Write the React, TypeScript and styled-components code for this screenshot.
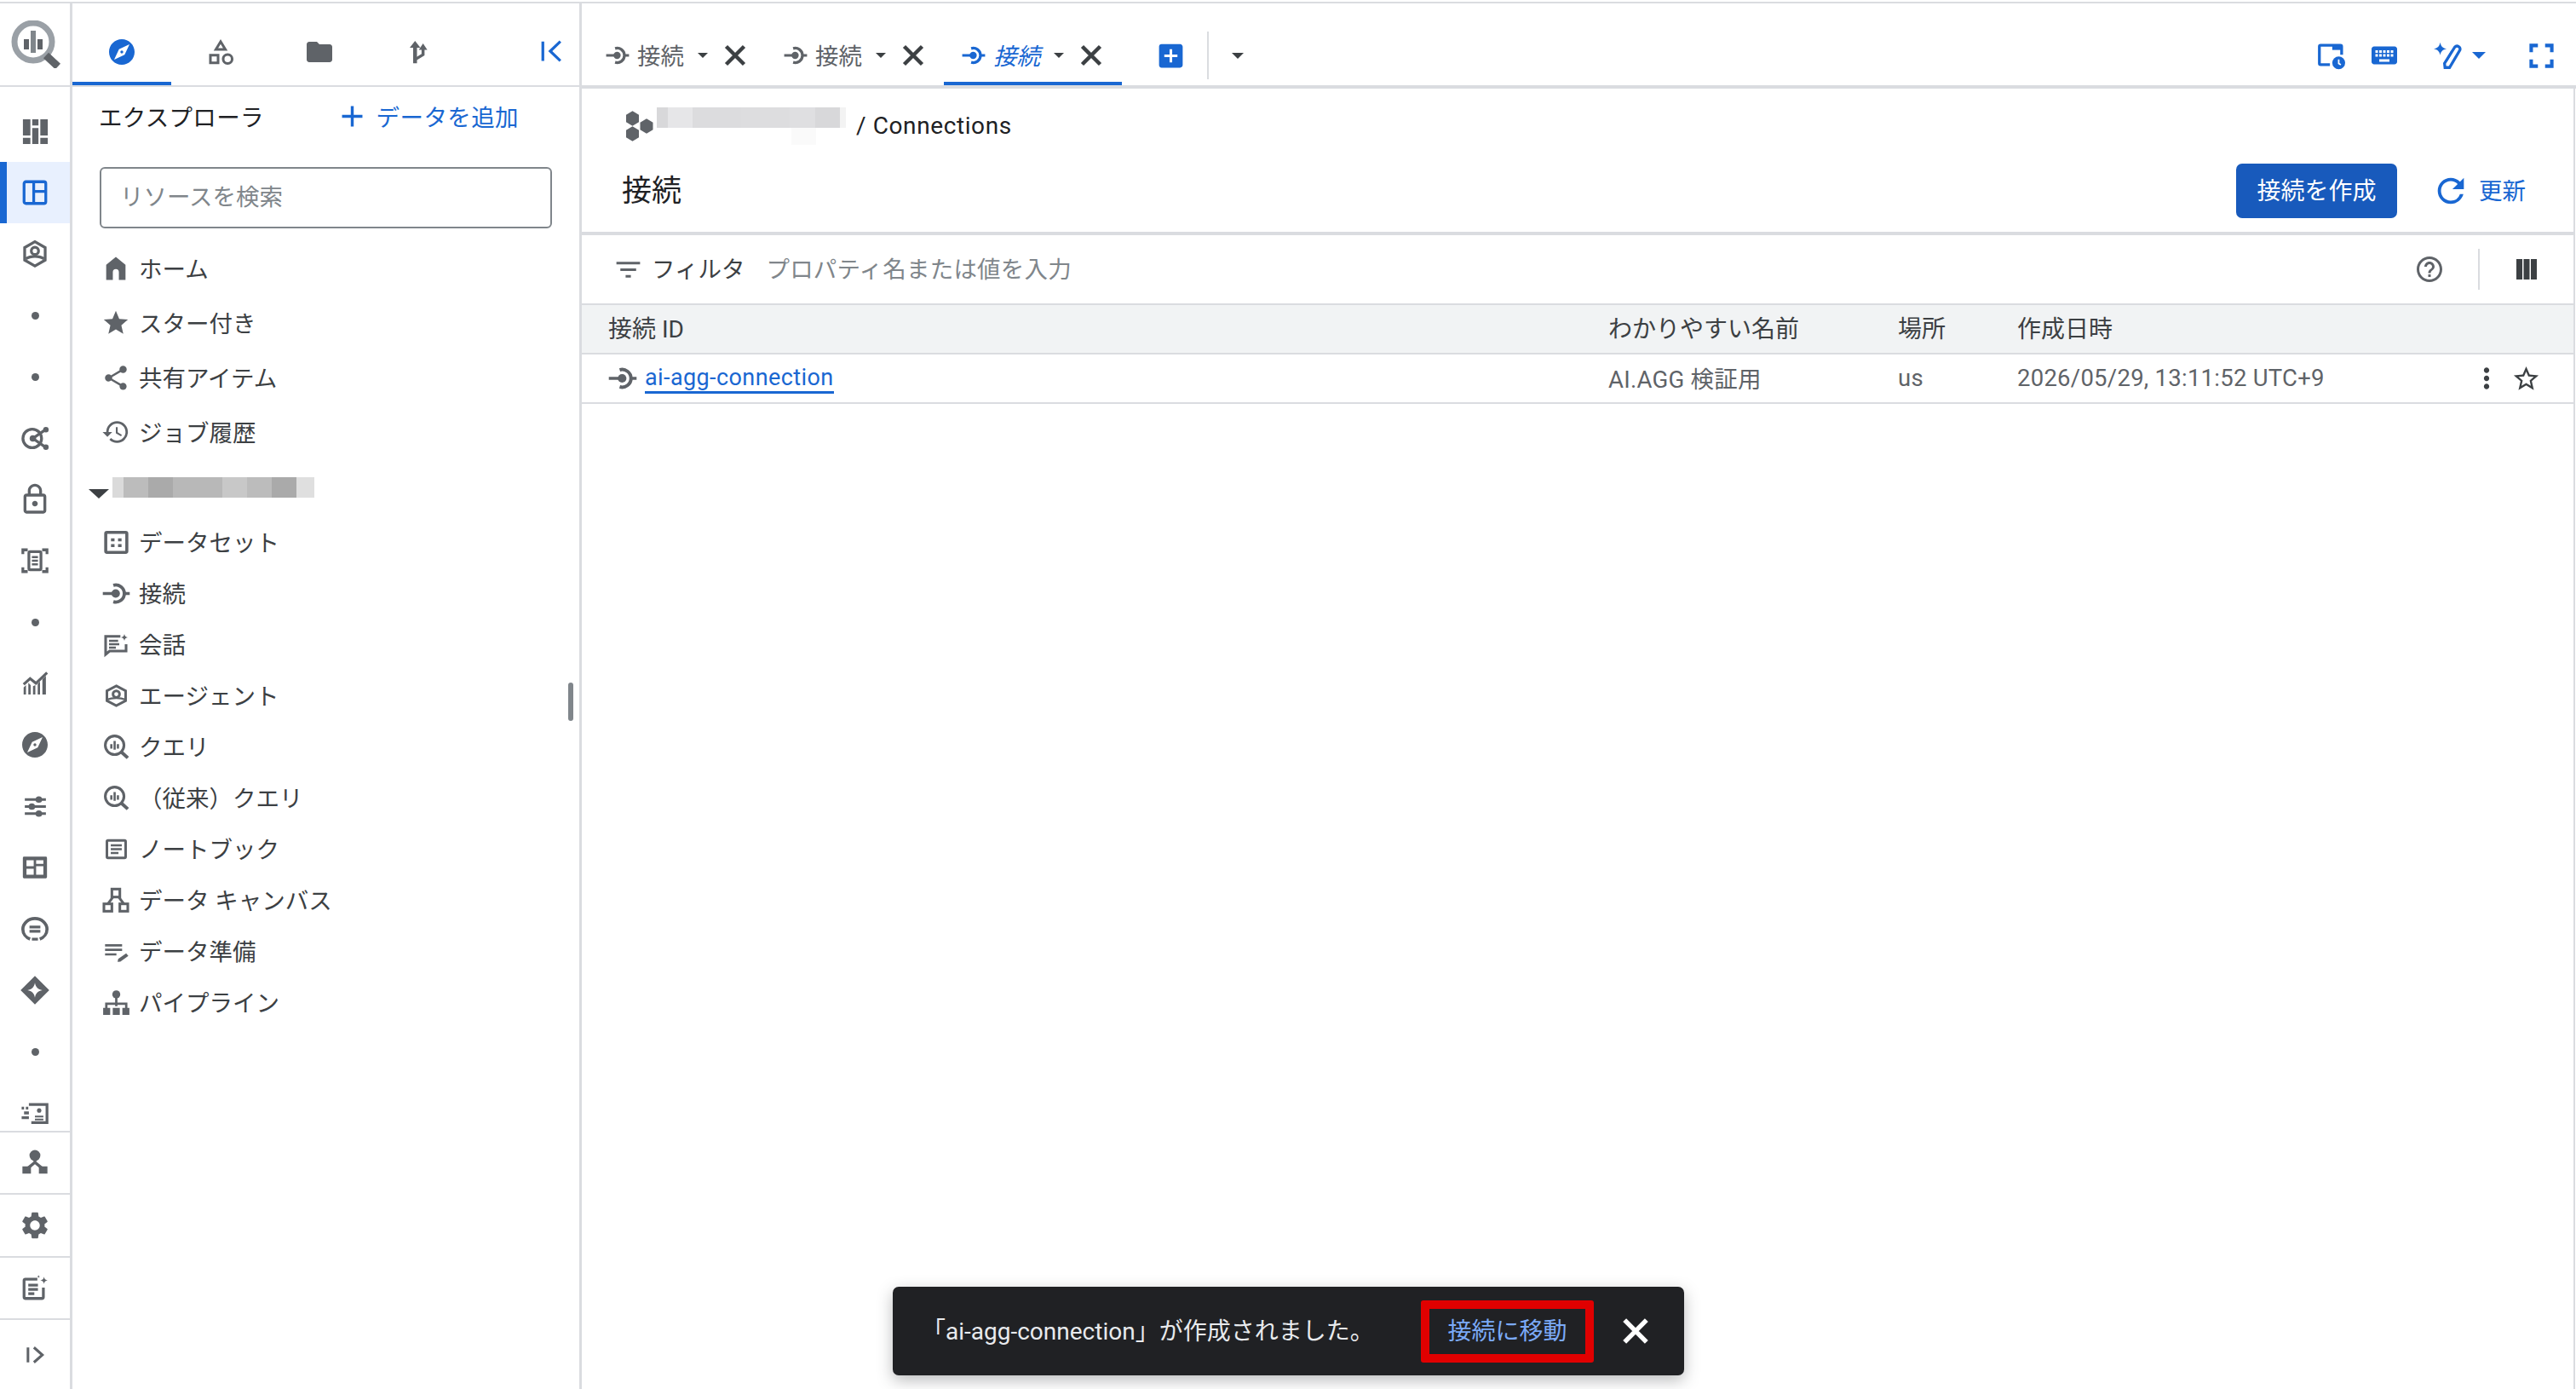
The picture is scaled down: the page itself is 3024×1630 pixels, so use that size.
import * as React from 'react';
import styled, { createGlobalStyle } from 'styled-components';
import {
  MdAdd,
  MdAddBox,
  MdExplore,
  MdFilterList,
  MdFolder,
  MdHelpOutline,
  MdHistory,
  MdKeyboard,
  MdMoreVert,
  MdOutlineCategory,
  MdOutlineLock,
  MdRefresh,
  MdSettings,
  MdShare,
  MdStar,
  MdStarBorder,
} from 'react-icons/md';

const BLUE = '#1967d2';
const BORDER = '#dadce0';
const ICON = '#5f6368';
const TEXT = '#202124';

const GlobalStyle = createGlobalStyle`
  html, body {
    margin: 0;
    padding: 0;
    background: #ffffff;
  }
  body {
    font-family: Roboto, "Noto Sans CJK JP", sans-serif;
    color: ${TEXT};
  }
  * {
    box-sizing: border-box;
  }
`;

const Glyph = styled.svg.attrs({ viewBox: '0 0 24 24', fill: 'currentColor' })<{ $s: number }>`
  display: block;
  flex: none;
  width: ${(p) => p.$s}px;
  height: ${(p) => p.$s}px;
`;

type G = { s: number };
const stroke = { fill: 'none', stroke: 'currentColor', strokeWidth: 2.3 };

const Mosaic = ({ s }: G) => (
  <Glyph $s={s}>
    <path d="M2 2h6v13H2zM2 17h6v5H2zM9.5 2h5v5h-5zM9.5 9h5v13h-5zM16 2h6v13h-6zM16 17h6v5h-6z" />
  </Glyph>
);
const Layout = ({ s }: G) => (
  <Glyph $s={s}>
    <rect x="3" y="3" width="18" height="18" rx="1.5" {...stroke} />
    <path d="M11 3v18M11 11h10" {...stroke} />
  </Glyph>
);
const HexPerson = ({ s }: G) => (
  <Glyph $s={s}>
    <path d="M12 1.8l8.5 4.9v10.4L12 22l-8.5-4.9V6.7z" {...stroke} />
    <circle cx="12" cy="9.5" r="3" {...stroke} />
    <path d="M4.5 16c2-1.4 4.6-2 7.5-2s5.5.6 7.5 2" {...stroke} />
  </Glyph>
);
const Target = ({ s }: G) => (
  <Glyph $s={s}>
    <circle cx="9.5" cy="12" r="7.5" {...stroke} />
    <circle cx="10" cy="12" r="2.6" />
    <path d="M10 12l10-7M10 12l10 7" {...stroke} />
    <circle cx="20.5" cy="5" r="2.2" />
    <circle cx="20.5" cy="19" r="2.2" />
  </Glyph>
);
const ScanDoc = ({ s }: G) => (
  <Glyph $s={s}>
    <path d="M2 6.5V3h4M18 3h4v3.5M22 17.5V21h-4M6 21H2v-3.5" {...stroke} />
    <rect x="7" y="4.5" width="10" height="15" rx="1" {...stroke} />
    <path d="M9.5 9h5M9.5 12h5M9.5 15h5" {...stroke} strokeWidth="1.6" />
  </Glyph>
);
const Growth = ({ s }: G) => (
  <Glyph $s={s}>
    <path d="M2 21v-6l2-2v8zM6 21V11l2 2v8zM10 21v-7l2-1v8zM14 21v-9l2-2v11zM18 21V8l3-3v16z" />
    <path d="M2 12.5l5.5-5 5 4L22 2.5" {...stroke} />
  </Glyph>
);
const Sliders = ({ s }: G) => (
  <Glyph $s={s}>
    <path d="M3 6h18M3 12h18M3 18h18" {...stroke} />
    <circle cx="15" cy="6" r="2.8" />
    <circle cx="9" cy="12" r="2.8" />
    <circle cx="15" cy="18" r="2.8" />
  </Glyph>
);
const Panels = ({ s }: G) => (
  <Glyph $s={s}>
    <path
      fillRule="evenodd"
      d="M3 3h18a1 1 0 011 1v16a1 1 0 01-1 1H3a1 1 0 01-1-1V4a1 1 0 011-1zM5 6v5h6V6zM5 13v5h6v-5zM13 6v3h6V6zM13 11v7h6v-7z"
    />
  </Glyph>
);
const ChatRound = ({ s }: G) => (
  <Glyph $s={s}>
    <path d="M8 20.5C4.5 19.2 2 16 2 12.3 2 7.4 6.5 3.5 12 3.5s10 3.9 10 8.8c0 3.7-2.5 6.9-6 8.2" {...stroke} strokeWidth="2.6" />
    <path d="M7.5 10.5h9M7.5 14h9M9.5 20.5h5" {...stroke} />
  </Glyph>
);
const SparkDiamond = ({ s }: G) => (
  <Glyph $s={s}>
    <path
      fillRule="evenodd"
      d="M12 .8L23.2 12 12 23.2.8 12zM12 6.2c.5 3.3 2.5 5.3 5.8 5.8-3.3.5-5.3 2.5-5.8 5.8-.5-3.3-2.5-5.3-5.8-5.8 3.3-.5 5.3-2.5 5.8-5.8z"
    />
  </Glyph>
);
const FastDoc = ({ s }: G) => (
  <Glyph $s={s}>
    <path d="M7 5h15v15H9" {...stroke} />
    <path d="M1 8h2M4.5 8h2M3 12h4M1 16h6" {...stroke} />
    <path d="M12 15h7M12 17.5h7" {...stroke} strokeWidth="1.4" />
    <circle cx="15.5" cy="10" r="1.8" />
  </Glyph>
);
const Hub = ({ s }: G) => (
  <Glyph $s={s}>
    <circle cx="12" cy="6" r="4.8" />
    <path d="M1 15.5h7.5V22H1zM15.5 15.5H23V22h-7.5z" />
    <path d="M12 9v3L6 17M12 12l6 5" {...stroke} strokeWidth="2.6" />
  </Glyph>
);
const SparkDoc = ({ s }: G) => (
  <Glyph $s={s}>
    <path d="M14 5H4a1 1 0 00-1 1v14a1 1 0 001 1h14a1 1 0 001-1v-8" {...stroke} />
    <path d="M6.5 10h8M6.5 13.5h8M6.5 17h5" {...stroke} />
    <path d="M19.5 3c.3 1.8 1.2 2.7 3 3-1.8.3-2.7 1.2-3 3-.3-1.8-1.2-2.7-3-3 1.8-.3 2.7-1.2 3-3z" />
    <path d="M15 1.5c.1.8.6 1.3 1.4 1.4-.8.1-1.3.6-1.4 1.4-.1-.8-.6-1.3-1.4-1.4.8-.1 1.3-.6 1.4-1.4z" />
  </Glyph>
);
const ExpandBar = ({ s }: G) => (
  <Glyph $s={s}>
    <path d="M5 4.5v15M11 4.5l8.5 7.5-8.5 7.5" {...stroke} strokeWidth="2.6" />
  </Glyph>
);
const CollapseBar = ({ s }: G) => (
  <Glyph $s={s}>
    <path d="M3 1.5v21M22 1.5L11 12l11 10.5" {...stroke} strokeWidth="3" />
  </Glyph>
);
const Branch = ({ s }: G) => (
  <Glyph $s={s}>
    <path d="M9 1.5L14 8h-3.2v14.5H7.2V8H4z" />
    <path d="M10 18.5l6.5-4V7.5" {...stroke} strokeWidth="2.8" />
    <path d="M16.5 4L20.5 10h-8z" />
  </Glyph>
);
const Connection = ({ s }: G) => (
  <Glyph $s={s}>
    <path d="M.5 12h9M19.5 12h4" {...stroke} strokeWidth="2.6" />
    <circle cx="11.5" cy="12" r="3.6" />
    <path d="M9.5 5a7.3 7.3 0 110 14" {...stroke} strokeWidth="2.8" />
  </Glyph>
);
const Cross = ({ s }: G) => (
  <Glyph $s={s}>
    <path d="M5 5l14 14M19 5L5 19" {...stroke} strokeWidth="3" />
  </Glyph>
);
const HomeArch = ({ s }: G) => (
  <Glyph $s={s}>
    <path d="M12 2.5L4 9v12.5h5.5V15a2.5 2.5 0 015 0v6.5H20V9z" />
  </Glyph>
);
const Dataset = ({ s }: G) => (
  <Glyph $s={s}>
    <rect x="3" y="3.5" width="18" height="17" rx="1" {...stroke} strokeWidth="2.6" />
    <path d="M7.5 8.5h3V11h-3zM13.5 8.5h3V11h-3zM7.5 13.5h3V16h-3zM13.5 13.5h3V16h-3z" />
  </Glyph>
);
const ChatSpark = ({ s }: G) => (
  <Glyph $s={s}>
    <path d="M16 5H3v16l3.5-3H21v-6" {...stroke} />
    <path d="M6 9h8M6 12h9M6 15h6" {...stroke} strokeWidth="1.8" />
    <path d="M19.5 3c.3 1.8 1.2 2.7 3 3-1.8.3-2.7 1.2-3 3-.3-1.8-1.2-2.7-3-3 1.8-.3 2.7-1.2 3-3z" />
  </Glyph>
);
const HexAgent = ({ s }: G) => (
  <Glyph $s={s}>
    <path d="M12 3l8.5 4.5v9L12 21l-8.5-4.500v-9z" {...stroke} />
    <circle cx="12" cy="10.5" r="3" {...stroke} />
    <path d="M3.5 15.5C6 14.5 9 14 12 14s6 .5 8.5 1.500" {...stroke} strokeWidth="1.8" />
  </Glyph>
);
const QueryGlass = ({ s }: G) => (
  <Glyph $s={s}>
    <circle cx="10.5" cy="10.5" r="8.5" {...stroke} strokeWidth="2.4" />
    <path d="M17 17l5.5 5" {...stroke} strokeWidth="3" />
    <path d="M6.5 9.5h2v4h-2zM9.5 6.5h2v8h-2zM12.5 9.5h2v4h-2z" />
  </Glyph>
);
const Notebook = ({ s }: G) => (
  <Glyph $s={s}>
    <rect x="3.5" y="4" width="17" height="16" rx="1" {...stroke} />
    <path d="M7 8.5h10M7 12h10M7 15.5h7" {...stroke} strokeWidth="1.8" />
  </Glyph>
);
const Canvas = ({ s }: G) => (
  <Glyph $s={s}>
    <rect x="8.5" y="2.5" width="7" height="7" {...stroke} />
    <rect x="1.5" y="15.5" width="7" height="6.5" {...stroke} />
    <rect x="15.5" y="15.5" width="7" height="6.5" {...stroke} />
    <path d="M9.5 9.5L5 15.5M14.5 9.5l4.5 6" {...stroke} />
  </Glyph>
);
const DataPrep = ({ s }: G) => (
  <Glyph $s={s}>
    <path d="M2.5 7h15M2.5 11h15M2.5 15h10" {...stroke} strokeWidth="2" />
    <path d="M13.5 21.5l.6-2.6 7-4.9 1.9 2.4-7 4.9z" />
  </Glyph>
);
const Pipeline = ({ s }: G) => (
  <Glyph $s={s}>
    <circle cx="12" cy="5" r="3.4" />
    <path d="M12 8v7M3.5 17v-4h17v4" {...stroke} strokeWidth="2" />
    <path d="M.8 16.5h6v6h-6zM9 16.5h6v6H9zM17.2 16.5h6v6h-6z" />
  </Glyph>
);
const HexCluster = ({ s }: G) => (
  <Glyph $s={s}>
    <polygon points="7,0.2 12,3.1 12,8.9 7,11.8 2,8.9 2,3.1" />
    <polygon points="18,6.2 23,9.1 23,14.9 18,17.8 13,14.9 13,9.1" />
    <polygon points="7,12.2 12,15.1 12,20.9 7,23.8 2,20.9 2,15.1" />
  </Glyph>
);
const ScreenClock = ({ s }: G) => (
  <Glyph $s={s}>
    <path d="M11 19.5H3a1 1 0 01-1-1V4a1 1 0 011-1h17a1 1 0 011 1v7" {...stroke} strokeWidth="2.4" />
    <path d="M13 3h8v4h-8z" />
    <circle cx="18.5" cy="18" r="5.5" />
    <path d="M18.5 15v3.5l1.8 1.2" fill="none" stroke="#ffffff" strokeWidth="1.3" />
  </Glyph>
);
const SparkPen = ({ s }: G) => (
  <Glyph $s={s}>
    <path d="M5.5.5c.6 3.3 2.2 4.9 5.5 5.5-3.3.6-4.9 2.2-5.5 5.5C4.9 8.2 3.3 6.6 0 6c3.300-.6 4.900-2.200 5.500-5.500z" />
    <path d="M18 4.500a2.600 2.600 0 014.300 2.700L13.500 22H9.600l-.4-3.500z" {...stroke} strokeWidth="2.4" />
    <path d="M15.500 8L11 16" {...stroke} strokeWidth="1.8" />
  </Glyph>
);
const Corners = ({ s }: G) => (
  <Glyph $s={s}>
    <path d="M2 8.500V2h6.500M15.500 2H22v6.500M22 15.500V22h-6.500M8.500 22H2v-6.500" {...stroke} strokeWidth="3.4" />
  </Glyph>
);
const Columns = ({ s }: G) => (
  <Glyph $s={s}>
    <path d="M0 0h7v24H0zM8.500 0h7v24h-7zM17 0h7v24h-7z" />
  </Glyph>
);

const Logo = () => (
  <svg width="58" height="56" viewBox="0 0 58 56" fill="none">
    <circle cx="26" cy="25" r="22" stroke="#9aa0a6" strokeWidth="7" />
    <path d="M41 41l14 13" stroke="#5f6368" strokeWidth="9" />
    <path d="M15 22h6v12h-6zM31 22h6v12h-6z" fill="#5f6368" />
    <path d="M23 12h6v26h-6z" fill="#80868b" />
  </svg>
);

const Page = styled.div`
  position: relative;
  display: flex;
  height: 1628px;
  margin-top: 2px;
  border-top: 2px solid ${BORDER};
  overflow: hidden;
`;

const Rail = styled.nav`
  display: flex;
  flex-direction: column;
  flex: none;
  width: 85px;
  height: 100%;
  border-right: 3px solid ${BORDER};
`;

const RailLogo = styled.div`
  display: flex;
  flex: none;
  justify-content: center;
  align-items: flex-start;
  height: 98px;
  padding: 20px 0 0 2px;
  border-bottom: 2px solid ${BORDER};
`;

const RailScroll = styled.div`
  flex: 1;
  min-height: 0;
  padding-top: 16px;
  overflow: hidden;
`;

const RailItem = styled.div<{ $active?: boolean }>`
  display: flex;
  align-items: center;
  justify-content: center;
  height: 72px;
  color: ${(p) => (p.$active ? BLUE : ICON)};
  background: ${(p) => (p.$active ? '#e8f0fe' : 'transparent')};
  border-left: 8px solid ${(p) => (p.$active ? BLUE : 'transparent')};
  padding-right: 8px;
`;

const RailDot = styled.span`
  width: 9px;
  height: 9px;
  border-radius: 50%;
  background: ${ICON};
`;

const RailFoot = styled.div`
  display: flex;
  flex: none;
  align-items: center;
  justify-content: center;
  height: 73.5px;
  color: ${ICON};
  border-top: 2px solid ${BORDER};

  &:last-child {
    height: 83px;
  }
`;

const Sidebar = styled.aside`
  display: flex;
  flex-direction: column;
  flex: none;
  width: 598px;
  height: 100%;
  border-right: 3px solid ${BORDER};
`;

const SideTabs = styled.div`
  display: flex;
  flex: none;
  height: 98px;
  border-bottom: 2px solid ${BORDER};
`;

const SideTab = styled.div<{ $active?: boolean }>`
  display: flex;
  align-items: center;
  justify-content: center;
  width: 116px;
  padding-top: 22px;
  color: ${(p) => (p.$active ? BLUE : ICON)};
  border-bottom: 4px solid ${(p) => (p.$active ? BLUE : 'transparent')};
`;

const Collapse = styled.div`
  display: flex;
  align-items: center;
  margin-left: auto;
  padding: 16px 20px 0 0;
  color: ${BLUE};
`;

const ExplorerHead = styled.div`
  display: flex;
  align-items: center;
  height: 68px;
  padding: 0 71px 0 31px;
  font-size: 27.5px;
`;

const ExplorerTitle = styled.span`
  flex: 1;
  letter-spacing: 0.3px;
`;

const AddData = styled.span`
  display: flex;
  align-items: center;
  gap: 8px;
  color: ${BLUE};
  letter-spacing: 0.4px;
`;

const SearchBox = styled.input`
  display: block;
  flex: none;
  width: 531px;
  height: 72px;
  margin: 26px 0 15px 32px;
  padding: 0 22px 2px;
  border: 2px solid #80868b;
  border-radius: 6px;
  outline: none;
  background: #ffffff;
  font: 27.5px Roboto, "Noto Sans CJK JP", sans-serif;

  &::placeholder {
    color: #80868b;
    opacity: 1;
  }
`;

const NavScroll = styled.div`
  position: relative;
  flex: 1;
  min-height: 0;
`;

const NavRow = styled.div<{ $h: number }>`
  display: flex;
  align-items: center;
  height: ${(p) => p.$h}px;
  padding: 0 0 3px 34px;
  font-size: 27.5px;
  color: #3c4043;
`;

const NavIcon = styled.span`
  display: flex;
  flex: none;
  align-items: center;
  justify-content: center;
  width: 34px;
  height: 34px;
  margin: 3px 10px 0 0;
  color: ${ICON};
`;

const ProjectRow = styled.div`
  display: flex;
  align-items: flex-start;
  height: 67px;
  padding: 21px 0 0 19px;
`;

const TreeCaret = styled.span`
  flex: none;
  width: 0;
  height: 0;
  margin: 14px 4px 0 0;
  border-left: 12px solid transparent;
  border-right: 12px solid transparent;
  border-top: 11px solid #3c4043;
`;

const Redacted = styled.div`
  position: relative;
  display: flex;
  flex: none;
`;

const Chip = styled.span<{ $w: number; $h: number; $c: string }>`
  width: ${(p) => p.$w}px;
  height: ${(p) => p.$h}px;
  background: ${(p) => p.$c};
`;

const SmearPatch = styled.span`
  position: absolute;
  top: 24px;
  left: 158px;
  width: 29px;
  height: 20px;
  background: #fafafa;
`;

const ScrollThumb = styled.span`
  position: absolute;
  top: 518px;
  right: 7px;
  width: 6px;
  height: 45px;
  border-radius: 3px;
  background: #80868b;
`;

const Main = styled.main`
  display: flex;
  flex-direction: column;
  flex: none;
  width: 2341px;
  height: 100%;
`;

const TabBar = styled.div`
  display: flex;
  flex: none;
  height: 100px;
  padding: 30px 0 0 7px;
  border-bottom: 4px solid ${BORDER};
`;

const Tab = styled.div<{ $active?: boolean }>`
  display: flex;
  align-items: center;
  width: 209px;
  padding-left: 21px;
  font-size: 27.5px;
  color: ${(p) => (p.$active ? BLUE : ICON)};
  border-bottom: 4px solid ${(p) => (p.$active ? BLUE : 'transparent')};
`;

const TabLabel = styled.span<{ $active?: boolean }>`
  margin: 0 0 3px 9px;
  font-style: ${(p) => (p.$active ? 'italic' : 'normal')};
`;

const Caret = styled.span<{ $c?: string; $w?: number }>`
  flex: none;
  width: 0;
  height: 0;
  border-left: ${(p) => (p.$w ?? 12) / 2}px solid transparent;
  border-right: ${(p) => (p.$w ?? 12) / 2}px solid transparent;
  border-top: ${(p) => (p.$w ?? 12) / 2}px solid ${(p) => p.$c ?? '#3c4043'};
`;

const TabCaret = styled(Caret)`
  margin-left: 16px;
`;

const TabClose = styled.span`
  display: flex;
  flex: none;
  margin-left: 14px;
  color: #3c4043;
`;

const BarGroup = styled.div`
  display: flex;
  align-items: center;
  padding-bottom: 4px;
`;

const AddTab = styled.span`
  display: flex;
  margin-left: 39px;
  color: ${BLUE};
`;

const BarDivider = styled.span`
  width: 2px;
  height: 56px;
  margin: 0 27px 0 24px;
  background: ${BORDER};
`;

const BarTools = styled(BarGroup)`
  margin-left: auto;
  padding-right: 26px;
  color: ${BLUE};
`;

const Tool = styled.span<{ $ml: number }>`
  display: flex;
  margin-left: ${(p) => p.$ml}px;
`;

const Content = styled.div`
  display: flex;
  flex: 1;
  flex-direction: column;
  min-height: 0;
  margin-right: 1px;
  border-right: 2px solid ${BORDER};
`;

const PageHead = styled.header`
  flex: none;
  padding: 0 56px 16px 47px;
  border-bottom: 4px solid ${BORDER};
`;

const Crumbs = styled.div`
  display: flex;
  align-items: center;
  height: 88px;
  font-size: 28px;
  color: ${ICON};
`;

const CrumbIcon = styled.span`
  display: flex;
  flex: none;
  margin-left: 2px;
  color: ${ICON};
`;

const CrumbRedacted = styled(Redacted)`
  align-self: flex-start;
  margin: 22px 0 0 3px;
`;

const CrumbText = styled.span`
  margin: 0 0 1px 12px;
  color: ${TEXT};
  letter-spacing: 0.6px;
`;

const TitleRow = styled.div`
  display: flex;
  align-items: center;
  height: 64px;
`;

const Title = styled.h1`
  flex: 1;
  margin: 0 0 8px;
  font-size: 35px;
  font-weight: 400;
`;

const PrimaryButton = styled.button`
  width: 189px;
  height: 64px;
  padding: 0 0 4px;
  border: none;
  border-radius: 7px;
  background: #185abc;
  color: #ffffff;
  font: 28px Roboto, "Noto Sans CJK JP", sans-serif;
`;

const GhostButton = styled.span`
  display: flex;
  align-items: center;
  gap: 10px;
  margin-left: 40px;
  font-size: 27.5px;
  color: ${BLUE};
`;

const GhostLabel = styled.span`
  margin-bottom: 5px;
`;

const FilterBar = styled.div`
  display: flex;
  flex: none;
  align-items: center;
  height: 80px;
  padding: 0 43px 0 36px;
  font-size: 27.5px;
`;

const FilterLabel = styled.span`
  margin: 0 0 4px 9px;
  color: #3c4043;
`;

const FilterHint = styled.span`
  flex: 1;
  margin: 0 0 4px 25px;
  color: #80868b;
  letter-spacing: 0.2px;
`;

const FilterHelp = styled.span`
  display: flex;
  color: ${ICON};
`;

const FilterDivider = styled.span`
  width: 2px;
  height: 48px;
  margin: 0 43px 0 39px;
  background: ${BORDER};
`;

const FilterColumns = styled.span`
  display: flex;
  color: #3c4043;
`;

const TableRow = styled.div<{ $head?: boolean }>`
  display: grid;
  flex: none;
  grid-template-columns: 1174px 340px 140px 1fr auto;
  align-items: center;
  height: ${(p) => (p.$head ? 60 : 58)}px;
  padding: 0 38px ${(p) => (p.$head ? 4 : 2)}px 31px;
  font-size: 27.5px;
  letter-spacing: 0.25px;
  color: ${(p) => (p.$head ? '#3c4043' : ICON)};
  background: ${(p) => (p.$head ? '#f1f3f4' : '#ffffff')};
  border-bottom: 2px solid ${BORDER};
  border-top: ${(p) => (p.$head ? `2px solid ${BORDER}` : 'none')};
`;

const HeadCell = styled.span`
  font-size: 28px;
  letter-spacing: 0;
`;

const NameCell = styled.span`
  display: flex;
  align-items: center;
  gap: 9px;
  padding-top: 2px;
  color: ${ICON};
`;

const ConnLink = styled.a`
  color: ${BLUE};
  font-size: 27px;
  letter-spacing: 0.4px;
  line-height: 32px;
  border-bottom: 3px solid ${BLUE};
`;

const RowActions = styled.span`
  display: flex;
  align-items: center;
  gap: 10px;
  padding-top: 2px;
  margin-left: -2px;
  color: #3c4043;
`;

const Snackbar = styled.div`
  position: absolute;
  left: 1048px;
  bottom: 16px;
  display: flex;
  align-items: center;
  width: 929px;
  height: 104px;
  padding-left: 34px;
  border-radius: 7px;
  background: #202124;
  color: #e8eaed;
  font-size: 28px;
  box-shadow: 0 6px 18px rgba(60, 64, 67, 0.35);
`;

const SnackText = styled.span`
  width: 586px;
  margin-bottom: 4px;
  white-space: nowrap;
`;

const SnackAction = styled.span`
  display: flex;
  align-items: center;
  justify-content: center;
  width: 203px;
  height: 73px;
  padding-bottom: 4px;
  border: 10px solid #e00000;
  border-radius: 3px;
  color: #7baaf7;
`;

const SnackClose = styled.span`
  display: flex;
  margin-left: 27px;
  color: #ffffff;
`;

const railTop = [
  <Mosaic s={35} />,
  <Layout s={34} />,
  <HexPerson s={34} />,
  null,
  null,
  <Target s={35} />,
  <MdOutlineLock size={40} />,
  <ScanDoc s={34} />,
  null,
  <Growth s={33} />,
  <MdExplore size={36} />,
  <Sliders s={33} />,
  <Panels s={34} />,
  <ChatRound s={34} />,
  <SparkDiamond s={36} />,
  null,
  <FastDoc s={34} />,
];

const railBottom = [<Hub s={32} />, <MdSettings size={38} />, <SparkDoc s={34} />, <ExpandBar s={28} />];

const shortcuts = [
  { label: 'ホーム', icon: <HomeArch s={34} /> },
  { label: 'スター付き', icon: <MdStar size={36} /> },
  { label: '共有アイテム', icon: <MdShare size={35} /> },
  { label: 'ジョブ履歴', icon: <MdHistory size={36} /> },
];

const resources = [
  { label: 'データセット', icon: <Dataset s={33} /> },
  { label: '接続', icon: <Connection s={33} /> },
  { label: '会話', icon: <ChatSpark s={32} /> },
  { label: 'エージェント', icon: <HexAgent s={31} /> },
  { label: 'クエリ', icon: <QueryGlass s={31} /> },
  { label: '（従来）クエリ', icon: <QueryGlass s={31} /> },
  { label: 'ノートブック', icon: <Notebook s={31} /> },
  { label: 'データ キャンバス', icon: <Canvas s={32} /> },
  { label: 'データ準備', icon: <DataPrep s={32} /> },
  { label: 'パイプライン', icon: <Pipeline s={33} /> },
];

const projectChips = [
  { w: 13, c: '#dadada' },
  { w: 29, c: '#bcbcbc' },
  { w: 29, c: '#aaaaaa' },
  { w: 58, c: '#b8b8b8' },
  { w: 29, c: '#c8c8c8' },
  { w: 29, c: '#bcbcbc' },
  { w: 29, c: '#aaaaaa' },
  { w: 21, c: '#dfdfdf' },
];

const crumbChips = [
  { w: 13, c: '#d8d8da' },
  { w: 29, c: '#e6e6e8' },
  { w: 57, c: '#dcdcde' },
  { w: 57, c: '#dddddf' },
  { w: 30, c: '#dfdfe1' },
  { w: 29, c: '#d8d8da' },
  { w: 7, c: '#f3f3f3' },
];

const tabs = [{ active: false }, { active: false }, { active: true }];

function App() {
  return (
    <>
      <GlobalStyle />
      <Page>
        <Rail>
          <RailLogo>
            <Logo />
          </RailLogo>
          <RailScroll>
            {railTop.map((icon, i) => (
              <RailItem key={i} $active={i === 1}>
                {icon ?? <RailDot />}
              </RailItem>
            ))}
          </RailScroll>
          {railBottom.map((icon, i) => (
            <RailFoot key={i}>{icon}</RailFoot>
          ))}
        </Rail>

        <Sidebar>
          <SideTabs>
            <SideTab $active>
              <MdExplore size={36} />
            </SideTab>
            <SideTab>
              <MdOutlineCategory size={36} />
            </SideTab>
            <SideTab>
              <MdFolder size={36} />
            </SideTab>
            <SideTab>
              <Branch s={30} />
            </SideTab>
            <Collapse>
              <CollapseBar s={26} />
            </Collapse>
          </SideTabs>
          <ExplorerHead>
            <ExplorerTitle>エクスプローラ</ExplorerTitle>
            <AddData>
              <MdAdd size={41} />
              データを追加
            </AddData>
          </ExplorerHead>
          <SearchBox placeholder="リソースを検索" />
          <NavScroll>
            {shortcuts.map((item) => (
              <NavRow key={item.label} $h={64}>
                <NavIcon>{item.icon}</NavIcon>
                {item.label}
              </NavRow>
            ))}
            <ProjectRow>
              <TreeCaret />
              <Redacted>
                {projectChips.map((chip, i) => (
                  <Chip key={i} $w={chip.w} $h={24} $c={chip.c} />
                ))}
              </Redacted>
            </ProjectRow>
            {resources.map((item) => (
              <NavRow key={item.label} $h={60}>
                <NavIcon>{item.icon}</NavIcon>
                {item.label}
              </NavRow>
            ))}
            <ScrollThumb />
          </NavScroll>
        </Sidebar>

        <Main>
          <TabBar>
            {tabs.map((tab, i) => (
              <Tab key={i} $active={tab.active}>
                <Connection s={28} />
                <TabLabel $active={tab.active}>接続</TabLabel>
                <TabCaret />
                <TabClose>
                  <Cross s={36} />
                </TabClose>
              </Tab>
            ))}
            <BarGroup>
              <AddTab>
                <MdAddBox size={37} />
              </AddTab>
              <BarDivider />
              <Caret $w={14} />
            </BarGroup>
            <BarTools>
              <Tool $ml={0}>
                <ScreenClock s={33} />
              </Tool>
              <Tool $ml={28}>
                <MdKeyboard size={36} />
              </Tool>
              <Tool $ml={40}>
                <SparkPen s={33} />
              </Tool>
              <Tool $ml={12}>
                <Caret $c={BLUE} $w={16} />
              </Tool>
              <Tool $ml={51}>
                <Corners s={29} />
              </Tool>
            </BarTools>
          </TabBar>

          <Content>
            <PageHead>
              <Crumbs>
                <CrumbIcon>
                  <HexCluster s={36} />
                </CrumbIcon>
                <CrumbRedacted>
                  {crumbChips.map((chip, i) => (
                    <Chip key={i} $w={chip.w} $h={24} $c={chip.c} />
                  ))}
                  <SmearPatch />
                </CrumbRedacted>
                <CrumbText>/ Connections</CrumbText>
              </Crumbs>
              <TitleRow>
                <Title>接続</Title>
                <PrimaryButton>接続を作成</PrimaryButton>
                <GhostButton>
                  <MdRefresh size={46} />
                  <GhostLabel>更新</GhostLabel>
                </GhostButton>
              </TitleRow>
            </PageHead>

            <FilterBar>
              <MdFilterList size={37} color="#5f6368" />
              <FilterLabel>フィルタ</FilterLabel>
              <FilterHint>プロパティ名または値を入力</FilterHint>
              <FilterHelp>
                <MdHelpOutline size={36} />
              </FilterHelp>
              <FilterDivider />
              <FilterColumns>
                <Columns s={24} />
              </FilterColumns>
            </FilterBar>

            <TableRow $head>
              <HeadCell>接続 ID</HeadCell>
              <HeadCell>わかりやすい名前</HeadCell>
              <HeadCell>場所</HeadCell>
              <HeadCell>作成日時</HeadCell>
              <span />
            </TableRow>
            <TableRow>
              <NameCell>
                <Connection s={34} />
                <ConnLink>ai-agg-connection</ConnLink>
              </NameCell>
              <span>AI.AGG 検証用</span>
              <span>us</span>
              <span>2026/05/29, 13:11:52 UTC+9</span>
              <RowActions>
                <MdMoreVert size={38} />
                <MdStarBorder size={35} />
              </RowActions>
            </TableRow>
          </Content>
        </Main>

        <Snackbar>
          <SnackText>「ai-agg-connection」が作成されました。</SnackText>
          <SnackAction>接続に移動</SnackAction>
          <SnackClose>
            <Cross s={44} />
          </SnackClose>
        </Snackbar>
      </Page>
    </>
  );
}

export default App;
